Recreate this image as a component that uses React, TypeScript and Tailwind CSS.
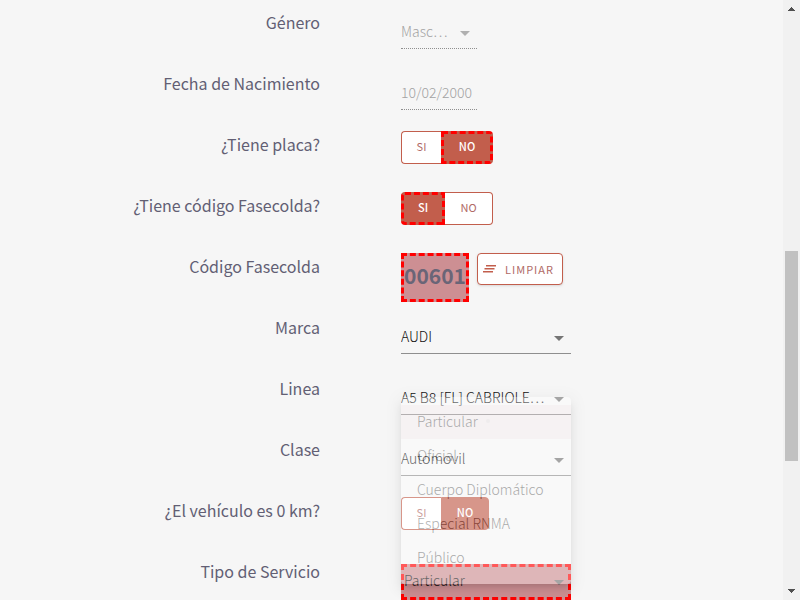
import type { ReactNode } from "react";

const serviceTypes = ["Particular", "Oficial", "Cuerpo Diplomático", "Especial RNMA", "Público"];

function Row({ label, id, children }: { label: string; id: string; children: ReactNode }) {
  return (
    <div className="grid h-[61px] shrink-0 grid-cols-[320fr_463fr]">
      <label htmlFor={id} className="pt-[10px] text-right text-[16px] leading-6 whitespace-nowrap text-[#625f74]">
        {label}
      </label>
      <div className="flex items-start gap-2 pt-[9px] pl-[81px]">{children}</div>
    </div>
  );
}

function Arrow({ className }: { className: string }) {
  return (
    <svg viewBox="0 0 10 5" className={`pointer-events-none absolute h-[5px] w-[10px] ${className}`}>
      <path d="M0 0h10L5 5z" fill="currentColor" />
    </svg>
  );
}

function Select({ id, value, disabled = false }: { id: string; value: string; disabled?: boolean }) {
  return (
    <div className={`relative ${disabled ? "w-[76px]" : "w-[170px]"}`}>
      <select
        id={id}
        disabled={disabled}
        className={`h-10 w-full appearance-none border-b pt-[6px] text-[14px] font-light opacity-100 ${
          disabled ? "border-dotted border-[#8f8f8f] text-[#a3a3a3]" : "border-[#8f8f8f] text-[#111]"
        }`}
      >
        <option>{value}</option>
      </select>
      <Arrow className={disabled ? "top-[22px] right-[7px] text-[#b0b0b0]" : "top-[22px] right-[7px] text-[#757575]"} />
    </div>
  );
}

function Toggle({ id, value, marked = false }: { id: string; value: "SI" | "NO"; marked?: boolean }) {
  const on = "bg-[#c25e4c] text-white font-medium";
  const off = "bg-white text-[#b06a66] font-normal";
  const ring = marked ? "border-[3px] border-dashed border-[#f00]" : "border border-[#c25e4c]";
  return (
    <div className="flex h-[33px] text-[11px]">
      <button
        id={id}
        type="button"
        className={`rounded-l-[4px] pb-[2px] ${value === "SI" ? `${on} ${ring} ${marked ? "w-[44px]" : "w-[41px]"}` : `${off} w-10 border border-r-0 border-[#c25e4c]`}`}
      >
        SI
      </button>
      <button
        type="button"
        className={`rounded-r-[4px] pb-[2px] ${value === "NO" ? `${on} ${ring} ${marked ? "w-[52px]" : "w-[48px]"}` : `${off} w-12 border border-l-0 border-[#c25e4c]`}`}
      >
        NO
      </button>
    </div>
  );
}

function ServiceMenu() {
  return (
    <ul className="absolute bottom-4 left-0 w-[170px] rounded-[4px] bg-white pt-2 pb-[9px] opacity-35 shadow-[0_5px_5px_-3px_rgba(0,0,0,0.4),0_8px_10px_1px_rgba(0,0,0,0.14),0_3px_14px_2px_rgba(0,0,0,0.12)]">
      {serviceTypes.map((type, i) => (
        <li
          key={type}
          className={`flex h-[34px] items-center px-4 pb-[2px] text-[14px] font-light text-[#111] ${i === 0 ? "bg-[#f6ebee]" : ""}`}
        >
          {type}
          {i === 0 && <span className="ml-2 size-1 rounded-full bg-[#e3dcdf]" />}
        </li>
      ))}
    </ul>
  );
}

export default function App() {
  return (
    <div className="flex h-screen overflow-hidden bg-[#f6f6f6] font-['Noto_Sans_CJK_KR',sans-serif]">
      <form className="flex min-w-0 flex-1 flex-col overflow-hidden">
        <Row label="Género" id="genero">
          <Select id="genero" value="Masc…" disabled />
        </Row>
        <Row label="Fecha de Nacimiento" id="nacimiento">
          <input
            id="nacimiento"
            disabled
            defaultValue="10/02/2000"
            className="h-10 w-[76px] border-b border-dotted border-[#8f8f8f] pt-[5px] text-[14px] font-light text-[#a3a3a3]"
          />
        </Row>
        <Row label="¿Tiene placa?" id="placa">
          <Toggle id="placa" value="NO" marked />
        </Row>
        <Row label="¿Tiene código Fasecolda?" id="tiene-codigo">
          <Toggle id="tiene-codigo" value="SI" marked />
        </Row>
        <Row label="Código Fasecolda" id="codigo">
          <input
            id="codigo"
            defaultValue="00601"
            className="h-[49px] w-[68px] border-[3px] border-dashed border-[#f00] bg-[#cd8f93] pb-[6px] text-[21px] font-bold text-[#6a6577]"
          />
          <button
            type="button"
            className="flex h-8 w-[86px] items-center gap-[9px] rounded-[4px] border border-[#c25e4c] bg-white pl-[5px] text-[11px] tracking-[1px] text-[#b06a66] shadow-sm"
          >
            <svg viewBox="0 0 13 8" className="h-2 w-[13px]" fill="#c25e4c">
              <path d="M3 0h10v1.4H3zM1.5 3h10v1.6H1.5zM0 6h10v1.4H0z" />
            </svg>
            LIMPIAR
          </button>
        </Row>
        <Row label="Marca" id="marca">
          <Select id="marca" value="AUDI" />
        </Row>
        <Row label="Linea" id="linea">
          <Select id="linea" value="A5 B8 [FL] CABRIOLE…" />
        </Row>
        <Row label="Clase" id="clase">
          <Select id="clase" value="Automovil" />
        </Row>
        <Row label="¿El vehículo es 0 km?" id="cero-km">
          <Toggle id="cero-km" value="NO" />
        </Row>
        <Row label="Tipo de Servicio" id="servicio">
          <div className="relative mt-[6px] w-[170px]">
            <select
              id="servicio"
              className="h-9 w-full appearance-none border-[3px] border-dashed border-[#f00] bg-[#cd8f93] pb-[3px] text-[14px] font-light text-[#111]"
            >
              <option>Particular</option>
            </select>
            <Arrow className="top-4 right-[7px] text-[#757575]" />
            <ServiceMenu />
          </div>
        </Row>
      </form>
      <div aria-hidden="true" className="flex w-[17px] shrink-0 flex-col items-center bg-[#f1f1f1]">
        <svg viewBox="0 0 17 17" className="size-[17px]" shapeRendering="crispEdges">
          <path d="M5 11h7L8.500 7z" fill="#505050" />
        </svg>
        <div className="flex w-[13px] flex-1 flex-col">
          <div className="flex-[234]" />
          <div className="flex-[210] bg-[#c1c1c1]" />
          <div className="flex-[122]" />
        </div>
        <svg viewBox="0 0 17 17" className="size-[17px]" shapeRendering="crispEdges">
          <path d="M5 6h7L8.500 10z" fill="#505050" />
        </svg>
      </div>
    </div>
  );
}
